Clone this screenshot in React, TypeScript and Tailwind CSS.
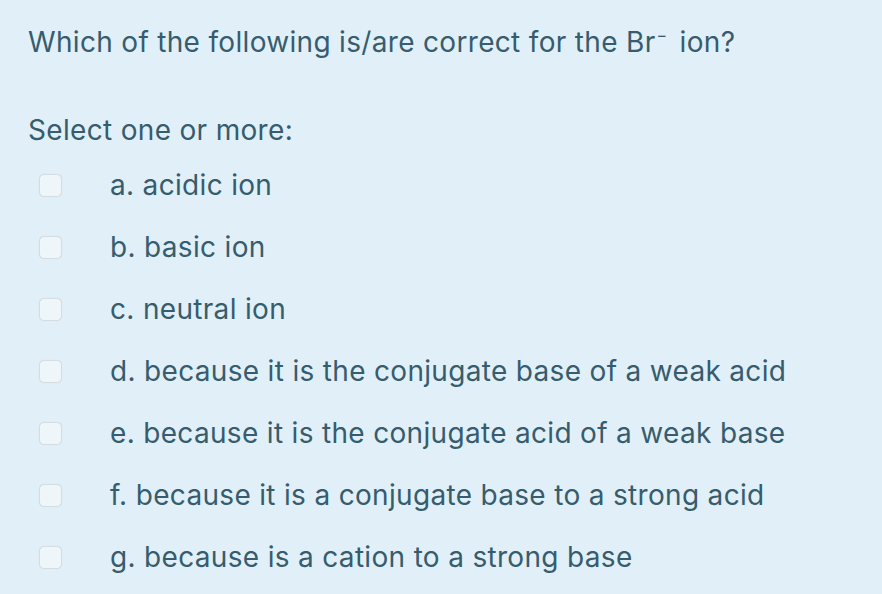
const options = [
  'a. acidic ion',
  'b. basic ion',
  'c. neutral ion',
  'd. because it is the conjugate base of a weak acid',
  'e. because it is the conjugate acid of a weak base',
  'f. because it is a conjugate base to a strong acid',
  'g. because is a cation to a strong base',
];

export default function App() {
  return (
    <div
      className="w-[882px] h-[594px] bg-[#e1f0f8] text-[#365c6e] overflow-hidden pl-[28px] pt-[24px] tracking-[0.32px]"
      style={{ fontFamily: 'Inter, "Liberation Sans", Arial, sans-serif' }}
    >
      <div className="text-[28px] leading-[36px]">
        Which of the following is/are correct for the Br
        <sup className="text-[16px] relative top-[-11px] ml-[1px] mr-[4px]">&minus;</sup> ion?
      </div>

      <div className="mt-[52px] text-[28px] leading-[36px]">Select one or more:</div>

      <div className="flex flex-col mt-[6px]">
        {options.map((o) => (
          <div key={o} className="flex items-center h-[62px]">
            <div className="w-[23px] h-[23px] ml-[11px] rounded-[5px] bg-[#eff6fa] border border-[#d5dde2] shadow-[0_0_1px_rgba(0,0,0,0.1)]" />
            <span className="ml-[48px] text-[28px] leading-[36px]">{o}</span>
          </div>
        ))}
      </div>
    </div>
  );
}
